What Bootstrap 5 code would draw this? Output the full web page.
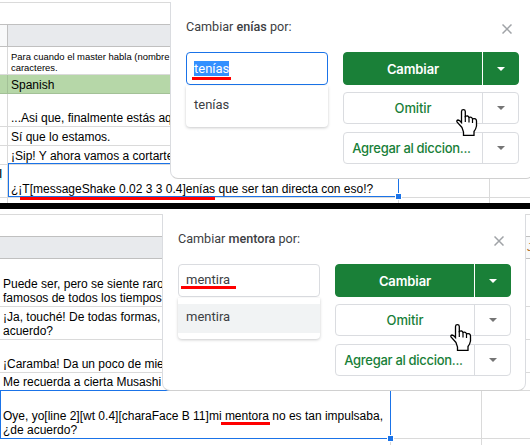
<!DOCTYPE html>
<html lang="es">
<head>
<meta charset="utf-8">
<meta name="viewport" content="width=device-width, initial-scale=1">
<title>Corrector ortográfico</title>
<link href="https://cdn.jsdelivr.net/npm/bootstrap@5.3.0/dist/css/bootstrap.min.css" rel="stylesheet">
<style>
body{width:530px;height:445px;font-family:"Liberation Sans",Arial,sans-serif;font-size:12px;line-height:14px;color:#000;background:#fff}
.panel-a{height:203px}
.divider{height:6px;background:#000}
.panel-b{height:236px}
.sheet-row{border-bottom:1px solid #dadada}
.sheet-row.dark-line{border-bottom-color:#c0c0c0}
.cell{border-right:1px solid #dadada;white-space:nowrap;padding:0 0 1px 3px;flex:none;overflow:hidden}
.c0{width:8px;padding:0}.c1{width:391px}.c2{width:91px}.c3{width:120px}
.heading .cell{background:#e8eaed;border-right-color:#c0c0c0}
.heading .c0,.heading .c3{background:#f8f9fa}
.heading .c3{padding:3px 0 0 45px;font-size:11px;color:#b06a1c}
.green,.green .cell{background:#b6d7a8;border-color:#a3c197}
.note{font-size:9.45px;line-height:11px}
.h3p{height:3px}.h6p{height:6px}.h19{height:19px}.h18{height:18px}.h22{height:22px}.h28{height:28px}.h33{height:33px}.h48{height:48px}
.select-box{border:1px solid #1a73e8}
.select-box::after{content:"";position:absolute;right:-3px;bottom:-3px;width:5px;height:5px;background:#1a73e8;box-shadow:0 0 0 1px #fff}
.sel-a{left:8px;top:163px;width:391px;height:34px}
.sel-b{left:0;top:181px;width:391px;height:49px}
.strike{height:3px;background:#f00}
.s1{left:192px;top:77px;width:39px}.s2{left:20px;top:197px;width:195px}
.s3{left:181px;top:77px;width:55px}.s4{left:221px;top:213px;width:49px}
.dialog-box{width:364px;height:177px;background:#fff;border:1px solid #dadce0;border-bottom-color:#d0d0d0;border-top:0;border-radius:0 0 8px 8px;padding:14px 14px 0 15px;font-family:Roboto,sans-serif;color:#3c4043}
.dlg-a{left:170px;top:2px}.dlg-b{left:162px;top:5px}
.dlg-head{height:36px;font-size:12.6px;line-height:22px}
.dlg-head b{font-weight:500}
.dlg-head svg{margin:8px 7px 0 0}
.word-field{width:142px;height:33px;border:1px solid #dadce0;border-radius:4px;padding:0 7px 1px;font-size:13px}
.word-field.active-field{border-color:#1a73e8}
.word-field mark{background:#3390ff;color:#fff;padding:0;line-height:15px}
.options{width:142px;height:41px;border-radius:0 0 4px 4px;box-shadow:0 1px 3px rgba(60,64,67,.28);padding:6px 0;font-size:13px;margin-top:1px}
.options>div{height:29px;padding:0 8px 3px}
.options .hot{background:#f1f3f4}
.acts{width:176px;gap:8px;font-family:Inter,"Open Sans",sans-serif}
.act{height:32px;border:1px solid #dadce0;border-radius:4px;color:#188038;font-weight:500;font-size:13px;line-height:20px}
.act.main{height:33px;background:#1a8038;border-color:#1a8038;color:#fff;font-weight:600;margin-bottom:-1px}
.act .lbl{width:138px;letter-spacing:-.1px;white-space:nowrap}
.act .lbl.tight{letter-spacing:-.3px;padding-right:3px}
.act .arr{border-left:1px solid #dadce0;color:#757575}
.act.main .arr{border-color:#fff;color:#fff;margin:-1px 0}
.caret{width:0;height:0;border:4px solid transparent;border-top-color:currentColor;border-bottom:0}
.hand-a{left:456px;top:109px}.hand-b{left:450px;top:115px}
.frag{left:0;top:169px;background:#cff;height:11px;line-height:11px;width:2px;overflow:hidden}
.frag span{margin-left:-1px}
</style>
<script src="https://cdn.jsdelivr.net/npm/bootstrap@5.3.0/dist/js/bootstrap.bundle.min.js"></script>
</head>
<body class="overflow-hidden">
<section class="panel-a position-relative overflow-hidden">
  <div class="sheet-row h3p"></div>
  <div class="sheet-row dark-line h22"></div>
  <div class="sheet-row dark-line heading d-flex h22"><div class="cell c0"></div><div class="cell c1"></div></div>
  <div class="sheet-row d-flex h28"><div class="cell c0"></div><div class="cell c1 note d-flex align-items-end"><span>Para cuando el master habla (nombre<br>caracteres.</span></div></div>
  <div class="sheet-row green d-flex h19"><div class="cell c0"></div><div class="cell c1 d-flex align-items-end">Spanish</div></div>
  <div class="sheet-row d-flex h33"><div class="cell c0"></div><div class="cell c1 d-flex align-items-end">...Asi que, finalmente estás aquí</div></div>
  <div class="sheet-row d-flex h19"><div class="cell c0"></div><div class="cell c1 d-flex align-items-end">Sí que lo estamos.</div></div>
  <div class="sheet-row d-flex h19"><div class="cell c0"></div><div class="cell c1 d-flex align-items-end">¡Sip! Y ahora vamos a cortarte</div></div>
  <div class="sheet-row d-flex h33"><div class="cell c0"></div><div class="cell c1 d-flex align-items-end">¿¡T[messageShake 0.02 3 3 0.4]enías que ser tan directa con eso!?</div><div class="cell c2"></div></div>
  <div class="d-flex h6p"><div class="cell c0"></div><div class="cell c1"></div><div class="cell c2"></div></div>
  <div class="position-absolute frag"><span>Í</span></div>
  <div class="position-absolute select-box sel-a"></div>
  <div class="position-absolute dialog-box dlg-a">
    <div class="dlg-head d-flex justify-content-between"><span>Cambiar <b>enías</b> por:</span>
      <svg width="10" height="10" viewBox="0 0 10 10" stroke="#a0a3a7" stroke-width="1.5"><path d="M.5.5l9 9M9.5.5l-9 9"/></svg></div>
    <div class="d-flex justify-content-between">
      <div><div class="word-field active-field d-flex align-items-center"><mark>tenías</mark></div>
        <div class="options"><div class="d-flex align-items-center">tenías</div></div></div>
      <div class="acts d-flex flex-column">
        <div class="act main d-flex"><div class="lbl d-flex align-items-center justify-content-center">Cambiar</div><div class="arr flex-fill d-flex align-items-center justify-content-center"><i class="caret"></i></div></div>
        <div class="act d-flex"><div class="lbl d-flex align-items-center justify-content-center">Omitir</div><div class="arr flex-fill d-flex align-items-center justify-content-center"><i class="caret"></i></div></div>
        <div class="act d-flex"><div class="lbl tight d-flex align-items-center justify-content-center">Agregar al diccion...</div><div class="arr flex-fill d-flex align-items-center justify-content-center"><i class="caret"></i></div></div>
      </div>
    </div>
  </div>
  <div class="position-absolute strike s1"></div>
  <div class="position-absolute strike s2"></div>
  <svg class="position-absolute hand-a" width="22" height="28" viewBox="0 0 22 28"><path id="hand" d="M6 18.5L1.2 13.2Q.2 11.5 2 11Q3.500 11 5.500 13.500V2.500Q5.600.7 7.400.7Q9.200.7 9.300 2.500V7.500Q12 6 13 8.500Q15.500 7.500 16.500 9.800Q20.300 8.800 20.500 12V17Q20 20 18 22.500V26.300H7.500V23Z" fill="#fff" stroke="#000" stroke-width="1.3"/><path d="M9.300 7V13M13 8.500V13.500M16.500 9.800V14" fill="none" stroke="#000" stroke-width="1.2"/></svg>
</section>
<div class="divider"></div>
<section class="panel-b position-relative overflow-hidden">
  <div class="sheet-row h6p"></div>
  <div class="sheet-row dark-line h22"></div>
  <div class="sheet-row dark-line heading d-flex h22"><div class="cell c1"></div><div class="cell c2"></div><div class="cell c3">J</div></div>
  <div class="sheet-row d-flex h48"><div class="cell c1 d-flex align-items-end">Puede ser, pero se siente raro<br>famosos de todos los tiempos</div></div>
  <div class="sheet-row d-flex h33"><div class="cell c1 d-flex align-items-end">¡Ja, touché! De todas formas,<br>acuerdo?</div></div>
  <div class="sheet-row d-flex h33"><div class="cell c1 d-flex align-items-end">¡Caramba! Da un poco de miedo</div></div>
  <div class="sheet-row d-flex h18"><div class="cell c1 d-flex align-items-end">Me recuerda a cierta Musashi</div></div>
  <div class="sheet-row d-flex h48"><div class="cell c1 d-flex align-items-end"><span>Oye, yo[line 2][wt 0.4][charaFace B 11]mi mentora no es tan impulsaba,<br>¿de acuerdo?</span></div><div class="cell c2"></div></div>
  <div class="d-flex h6p"><div class="cell c1"></div><div class="cell c2"></div></div>
  <div class="position-absolute select-box sel-b"></div>
  <div class="position-absolute dialog-box dlg-b">
    <div class="dlg-head d-flex justify-content-between"><span>Cambiar <b>mentora</b> por:</span>
      <svg width="10" height="10" viewBox="0 0 10 10" stroke="#a0a3a7" stroke-width="1.5"><path d="M.5.5l9 9M9.5.5l-9 9"/></svg></div>
    <div class="d-flex justify-content-between">
      <div><div class="word-field d-flex align-items-center">mentira</div>
        <div class="options"><div class="hot d-flex align-items-center">mentira</div></div></div>
      <div class="acts d-flex flex-column">
        <div class="act main d-flex"><div class="lbl d-flex align-items-center justify-content-center">Cambiar</div><div class="arr flex-fill d-flex align-items-center justify-content-center"><i class="caret"></i></div></div>
        <div class="act d-flex"><div class="lbl d-flex align-items-center justify-content-center">Omitir</div><div class="arr flex-fill d-flex align-items-center justify-content-center"><i class="caret"></i></div></div>
        <div class="act d-flex"><div class="lbl tight d-flex align-items-center justify-content-center">Agregar al diccion...</div><div class="arr flex-fill d-flex align-items-center justify-content-center"><i class="caret"></i></div></div>
      </div>
    </div>
  </div>
  <div class="position-absolute strike s3"></div>
  <div class="position-absolute strike s4"></div>
  <svg class="position-absolute hand-b" width="22" height="28" viewBox="0 0 22 28"><use href="#hand"/><path d="M9.300 7V13M13 8.500V13.500M16.500 9.800V14" fill="none" stroke="#000" stroke-width="1.2"/></svg>
</section>
</body>
</html>
